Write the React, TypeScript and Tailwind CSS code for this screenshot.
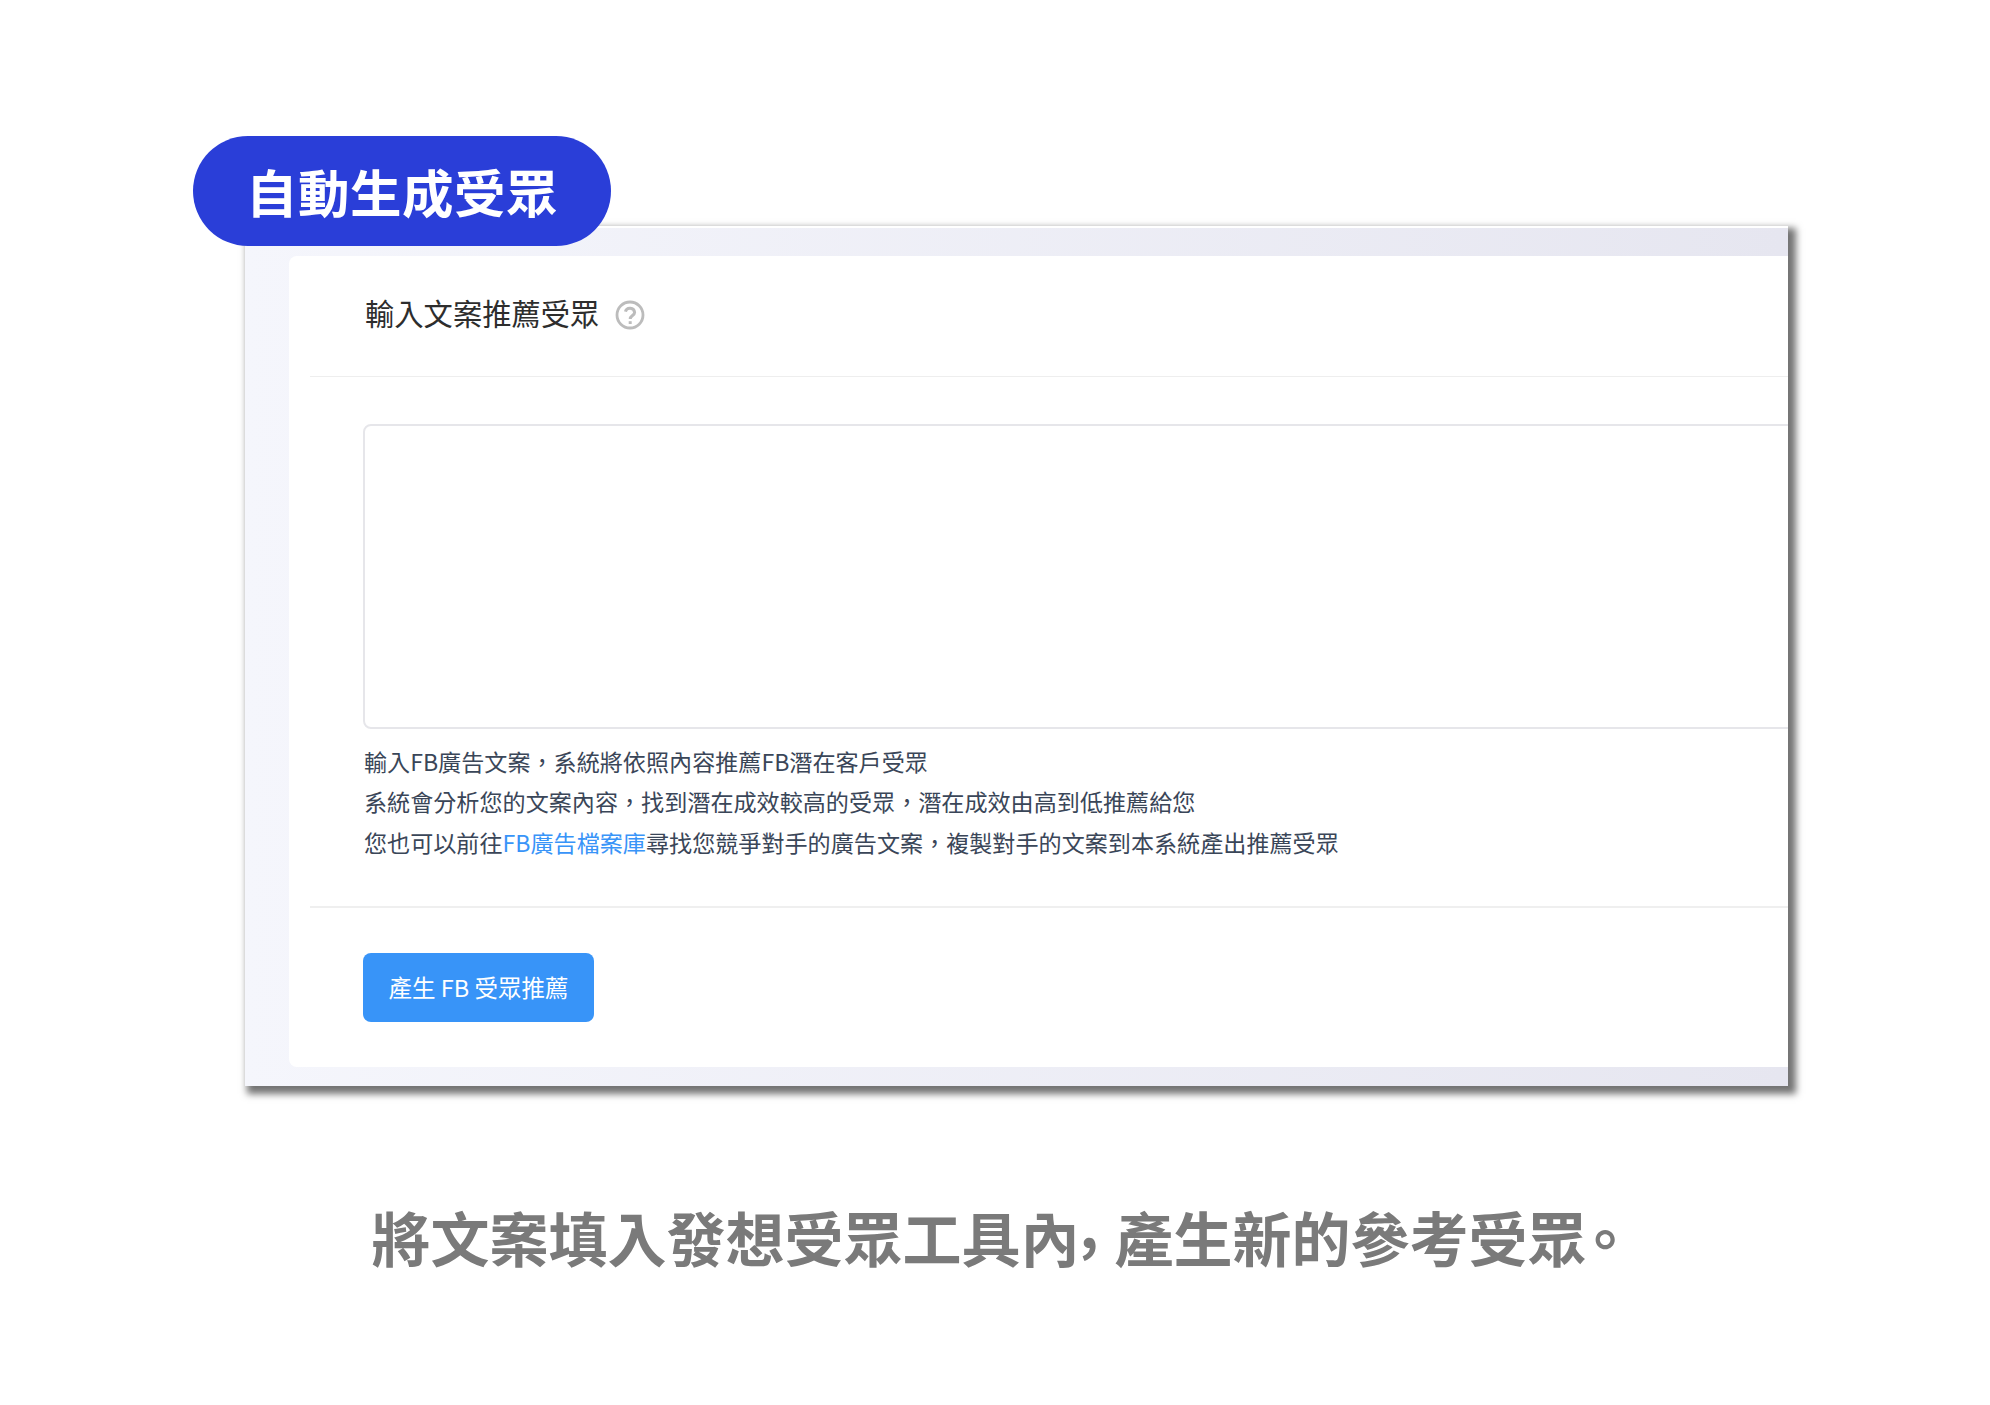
const cjk = { fontFamily: '"Noto Sans CJK TC", "Noto Sans", sans-serif' };

const HelpIcon = () => (
  <svg viewBox="0 0 30 30" fill="none" className="w-[30px] h-[30px] mt-[6px] text-[#bcbcbc]" stroke="currentColor">
    <circle cx="15" cy="15" r="13" strokeWidth="2.8" />
    <path d="M10.4 11.6a4.7 4.7 0 0 1 9.2 0.8c0 3-4.4 3.2-4.4 6.6" strokeWidth="3" />
    <path d="M15.2 21.2v2.8" strokeWidth="3" />
  </svg>
);

const App = () => {
  return (
    <div className="w-[1990px] h-[1405px] bg-white overflow-hidden flex flex-col" style={cjk}>
      <div className="pt-[136px] pl-[193px] flex flex-col items-start">
        <div className="relative z-10 w-[418px] h-[110px] rounded-[55px] bg-[#2a3ed8] flex items-center justify-center text-white text-[51.5px] leading-none font-bold tracking-[0.5px]">
          自動生成受眾
        </div>
        <div className="-mt-[20px] ml-[52px] w-[1543px] h-[860px] overflow-hidden flex flex-col bg-gradient-to-r from-[#f5f6fc] to-[#e6e6f0] border-t-2 border-white shadow-[5px_5px_7px_3px_rgba(0,0,0,0.55)] pt-[28px] pb-[19px] pl-[44px]">
          <div className="flex-1 bg-white rounded-l-[8px] flex flex-col">
            <div className="h-[121px] ml-[21px] border-b border-[#eeeeee] pl-[55px] flex items-start pt-[38px] gap-[16px]">
              <span className="text-[29.3px] leading-[36px] text-[#2d2d2d]">輸入文案推薦受眾</span>
              <HelpIcon />
            </div>
            <div className="ml-[74px] mt-[47px] h-[305px] w-[1500px] shrink-0 border-2 border-[#e6e6ea] rounded-[8px] bg-white" />
            <div className="ml-[75px] mt-[12px] text-[23.1px] leading-[40.4px] text-[#3a4658] whitespace-nowrap">
              <p>輸入FB廣告文案，系統將依照內容推薦FB潛在客戶受眾</p>
              <p>系統會分析您的文案內容，找到潛在成效較高的受眾，潛在成效由高到低推薦給您</p>
              <p>
                您也可以前往<span className="text-[#3894f8]">FB廣告檔案庫</span>尋找您競爭對手的廣告文案，複製對手的文案到本系統產出推薦受眾
              </p>
            </div>
            <div className="ml-[21px] mt-[44px] border-t-2 border-[#efefef]" />
            <button className="ml-[74px] mt-[45px] w-[231px] h-[69px] rounded-[8px] bg-[#3894f8] text-white text-[23.5px] leading-none flex items-center justify-center">
              產生 FB 受眾推薦
            </button>
          </div>
        </div>
      </div>
      <p className="mt-[111px] pl-[16px] text-center text-[59px] leading-[80px] font-bold text-[#7a7a7a] whitespace-nowrap">
        將文案填入發想受眾工具內<span className="inline-block -translate-y-[14px] w-[35px] text-left">,</span>產生新的參考受<span className="tracking-[-11px]">眾</span>。
      </p>
    </div>
  );
};

export default App;
